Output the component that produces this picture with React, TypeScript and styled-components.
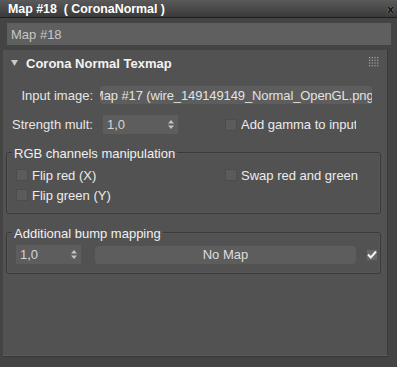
import React from "react";
import styled, { createGlobalStyle } from "styled-components";

const Global = createGlobalStyle`
  html, body { margin: 0; padding: 0; background: #444444; }
  body { font-family: "Liberation Sans", Arial, sans-serif; font-size: 13px; color: #e6e6e6; }
`;

const Window = styled.div`
  width: 397px;
  height: 367px;
  background: #444444;
  display: flex;
  flex-direction: column;
  overflow: hidden;
`;

const TitleBar = styled.div`
  height: 17px;
  border-bottom: 1px solid #1e1e1e;
  background: linear-gradient(#5a5a5a, #3a3a3a);
  display: flex;
  align-items: center;
  justify-content: space-between;
  padding: 0 3px 0 8px;
  font-weight: bold;
  font-size: 12.4px;
  color: #ffffff;
  white-space: pre;
`;

const CloseGlyph = styled.span`
  font-family: "DejaVu Sans", sans-serif;
  font-weight: bold;
  font-size: 11px;
  color: #111;
  text-shadow: 0 0 1px #bbb;
  line-height: 1;
  margin-top: 2px;
`;

const NameField = styled.div`
  margin: 5px 6px 0 7px;
  height: 22px;
  background: #5f5f5f;
  display: flex;
  align-items: center;
  padding-left: 4px;
  color: #c6c6c6;
`;

const Rollout = styled.div`
  margin: 5px 0 0 3px;
  width: 385px;
  height: 306px;
  box-sizing: border-box;
  background: #525252;
  border-right: 1px solid #3a3a3a;
  border-bottom: 1px solid #5c5c5c;
  box-shadow: 0 1px 0 #363636;
  display: flex;
  flex-direction: column;
`;

const RolloutHeader = styled.div`
  height: 26px;
  display: flex;
  align-items: center;
  padding: 0 8px 0 8px;
  font-weight: bold;
  font-size: 13px;
  color: #f2f2f2;
  gap: 8px;
`;

const Grip = styled.svg`
  margin-left: auto;
  margin-top: -2px;
`;

const Row = styled.div<{ $top: number; $h: number }>`
  margin-top: ${(p) => p.$top}px;
  height: ${(p) => p.$h}px;
  display: flex;
  align-items: center;
`;

const RightLabel = styled.div<{ $w: number }>`
  width: ${(p) => p.$w}px;
  text-align: right;
  flex: none;
`;

const LeftLabel = styled.div<{ $w: number }>`
  width: ${(p) => p.$w}px;
  padding-left: 9px;
  box-sizing: border-box;
  flex: none;
`;

const PathField = styled.div`
  margin-left: 7px;
  width: 272px;
  height: 18px;
  background: #5d5d5d;
  border-radius: 3px;
  overflow: hidden;
  white-space: nowrap;
  display: flex;
  align-items: center;
  color: #e2e2e2;
`;

const PathText = styled.span`
  margin-left: -7px;
  letter-spacing: -0.12px;
`;

const Spinner = styled.div<{ $w: number }>`
  width: ${(p) => p.$w}px;
  height: 19px;
  flex: none;
  box-sizing: border-box;
  background: #5d5d5d;
  display: flex;
  align-items: center;
  justify-content: space-between;
  padding: 0 4px 0 4px;
  color: #d6d6d6;
`;

const Check = styled.label<{ $gapLeft?: number }>`
  display: flex;
  align-items: center;
  gap: 4px;
  margin-left: ${(p) => p.$gapLeft ?? 0}px;
  white-space: nowrap;
  color: #ececec;
`;

const Box = styled.span`
  width: 12px;
  height: 12px;
  flex: none;
  box-sizing: border-box;
  background: #5b5b5b;
  border: 1px solid #4c4c4c;
  display: flex;
  align-items: center;
  justify-content: center;
`;

const Clip = styled.span<{ $w: number }>`
  display: inline-block;
  width: ${(p) => p.$w}px;
  overflow: hidden;
`;

const Group = styled.fieldset<{ $top: number }>`
  margin: ${(p) => p.$top}px 0 0 3px;
  width: 375px;
  box-sizing: border-box;
  border: 1px solid #3a3a3a;
  border-radius: 3px;
  box-shadow: inset 0 0 0 1px rgba(255, 255, 255, 0.03);
  padding: 0;
  min-width: 0;
`;

const Legend = styled.legend`
  margin-left: 5px;
  padding: 3px 2px 0 2px;
  line-height: 15px;
  color: #f0f0f0;
`;

const CheckGrid = styled.div`
  display: grid;
  grid-template-columns: 209px 1fr;
  grid-auto-rows: 20px;
  align-items: center;
  padding: 4px 0 8px 9px;
`;

const BumpRow = styled.div`
  display: flex;
  align-items: center;
  padding: 4px 0 9px 9px;
`;

const MapButton = styled.div`
  margin-left: 14px;
  width: 261px;
  height: 18px;
  background: #5d5d5d;
  border-radius: 4px;
  display: flex;
  align-items: center;
  justify-content: center;
  color: #dddddd;
`;

const CheckedBox = styled(Box)`
  margin-left: 10px;
  background: #666666;
  border-color: #555;
`;

const SpinArrows = () => (
  <svg width="6" height="11" viewBox="0 0 6 11">
    <path d="M3 1 L6 4.5 L0 4.5 Z" fill="#c4c4c4" />
    <path d="M0 6.5 L6 6.5 L3 10 Z" fill="#c4c4c4" />
  </svg>
);

const GripDots = () => {
  const dots = [];
  for (let r = 0; r < 4; r++)
    for (let c = 0; c < 4; c++)
      dots.push(<rect key={`${r}-${c}`} x={c * 2.7} y={r * 2.7} width="1.2" height="1.2" fill="#a8a8a8" />);
  return (
    <Grip width="10" height="10" viewBox="0 0 10 10">
      {dots}
    </Grip>
  );
};

export default function App() {
  return (
    <>
      <Global />
      <Window>
        <TitleBar>
          <span>{"Map #18  ( CoronaNormal )"}</span>
          <CloseGlyph>x</CloseGlyph>
        </TitleBar>
        <NameField>Map #18</NameField>
        <Rollout>
          <RolloutHeader>
            <svg width="7" height="6" viewBox="0 0 7 6">
              <path d="M0 0 L7 0 L3.5 6 Z" fill="#c8c8c8" />
            </svg>
            <span>Corona Normal Texmap</span>
            <GripDots />
          </RolloutHeader>

          <Row $top={10} $h={18}>
            <RightLabel $w={90}>Input image:</RightLabel>
            <PathField>
              <PathText>Map #17 (wire_149149149_Normal_OpenGL.png)</PathText>
            </PathField>
          </Row>

          <Row $top={11} $h={19}>
            <LeftLabel $w={100}>Strength mult:</LeftLabel>
            <Spinner $w={75}>
              <span>1,0</span>
              <SpinArrows />
            </Spinner>
            <Check $gapLeft={47}>
              <Box />
              <Clip $w={115}>Add gamma to input</Clip>
            </Check>
          </Row>

          <Group $top={9}>
            <Legend>RGB channels manipulation</Legend>
            <CheckGrid>
              <Check>
                <Box />
                <span>Flip red (X)</span>
              </Check>
              <Check>
                <Box />
                <span>Swap red and green</span>
              </Check>
              <Check>
                <Box />
                <span>Flip green (Y)</span>
              </Check>
            </CheckGrid>
          </Group>

          <Group $top={9}>
            <Legend>Additional bump mapping</Legend>
            <BumpRow>
              <Spinner $w={65}>
                <span>1,0</span>
                <SpinArrows />
              </Spinner>
              <MapButton>No Map</MapButton>
              <CheckedBox>
                <svg width="10" height="9" viewBox="0 0 10 9">
                  <path d="M1 4.5 L3.8 7.5 L9 1.5" stroke="#f4f4f4" strokeWidth="2" fill="none" />
                </svg>
              </CheckedBox>
            </BumpRow>
          </Group>
        </Rollout>
      </Window>
    </>
  );
}
